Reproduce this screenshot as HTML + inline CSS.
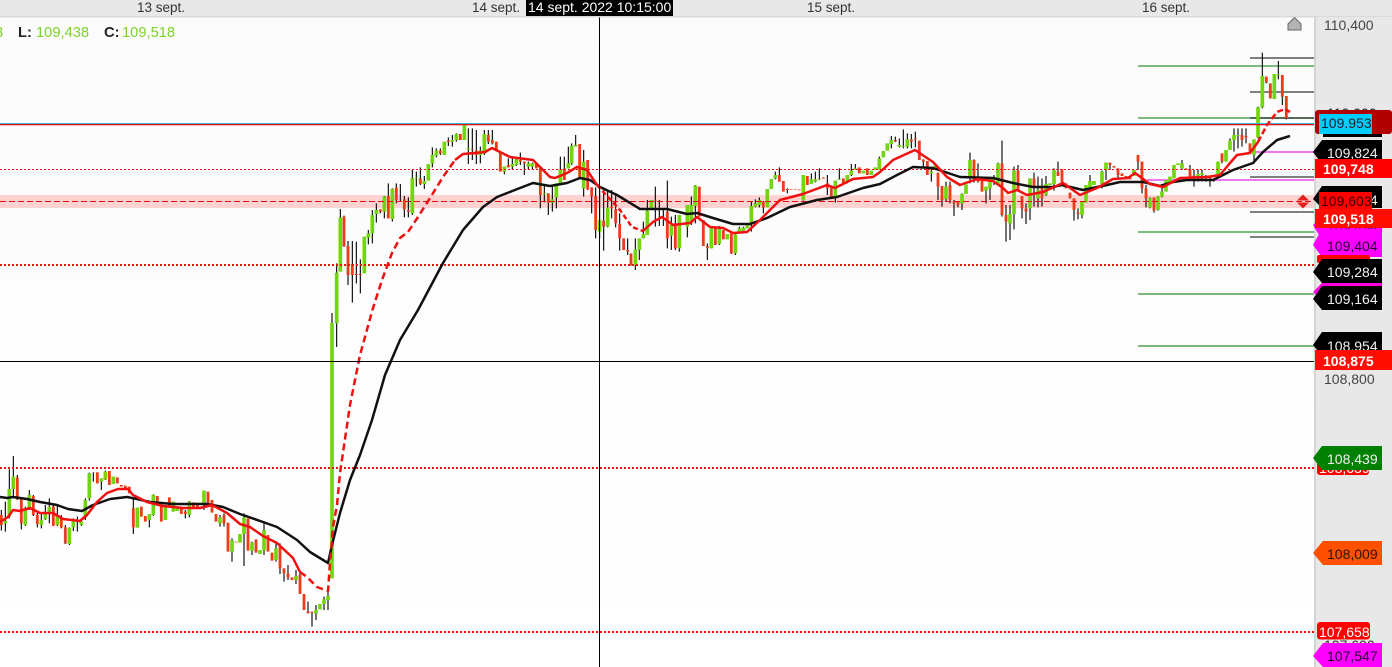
<!DOCTYPE html>
<html><head><meta charset="utf-8"><style>
html,body{margin:0;padding:0;background:#fff;overflow:hidden}
svg{display:block;font-family:"Liberation Sans",sans-serif;font-size:14px}
.w{fill:none;stroke:#000;stroke-width:3.300}
.g{fill:none;stroke:#72d60e;stroke-width:11}
.r{fill:none;stroke:#ee3c1a;stroke-width:8.500}
.ma{fill:none;stroke-width:2.500;stroke-linejoin:round;stroke-linecap:butt}
.d{font-size:13.500px}
.h{font-size:14.700px}
</style></head><body>
<svg width="1392" height="667" viewBox="0 0 1392 667" xmlns="http://www.w3.org/2000/svg">
<defs><linearGradient id="bg" x1="0" y1="0" x2="0" y2="1"><stop offset="0" stop-color="#fbfbfb"/><stop offset=".5" stop-color="#fdfdfd"/><stop offset="1" stop-color="#fff"/></linearGradient></defs>
<rect width="1392" height="667" fill="url(#bg)"/>
<rect y="195" width="1315" height="13" fill="#ffd2d2"/>
<rect x="1138" y="65" width="177" height="2" fill="#7cb97c"/>
<rect x="1138" y="117" width="177" height="2" fill="#7cb97c"/>
<rect x="1138" y="231" width="177" height="2" fill="#7cb97c"/>
<rect x="1138" y="293" width="177" height="2" fill="#7cb97c"/>
<rect x="1138" y="345" width="177" height="2" fill="#7cb97c"/>
<rect x="1250" y="57" width="65" height="2" fill="#808080"/>
<rect x="1250" y="91" width="65" height="2" fill="#808080"/>
<rect x="1250" y="117" width="65" height="2" fill="#556b55"/>
<rect x="1250" y="176" width="65" height="2" fill="#808080"/>
<rect x="1250" y="211" width="65" height="2" fill="#808080"/>
<rect x="1250" y="236" width="65" height="2" fill="#808080"/>
<rect x="1255" y="151" width="60" height="2" fill="#f075f0"/>
<rect x="1147" y="179" width="168" height="2" fill="#f075f0"/>

<g transform="translate(0,440) scale(.33333)">
<path class="w" d="M4 210V272M16 185V275M28 88V235M40 48V175M52 105V180M64 175V268M76 200V258M88 150V210M100 165V228M112 215V262M124 220V265M136 195V240M148 175V250M160 195V258M172 195V258M184 225V265M196 255V312M208 262V315M220 235V273M232 230V275M244 235V258M256 175V240M268 98V182M280 97V125M292 97V130M304 115V150M316 92V120M400 175V282M412 203V263M448 222V262M460 163V228M484 200V245M520 185V215M556 210V235M568 183V232M612 152V210M660 225V260M672 220V260M696 295V365M732 220V378M756 305V345M792 250V345M828 310V365M840 310V402M852 385V425M864 375V420M888 390V432M900 395V462M924 485V520M936 515V560M948 495V540M972 470V510M984 440V510M996 -381V-340"/>
<path class="g" d="M16 243V250M28 147V230M40 110V147M76 203V255M88 165V205M124 240V255M136 220V238M148 200V215M172 227V255M208 263V312M220 245V262M244 245V255M256 180V232M268 100V175M304 115V125M316 95V118M340 110V132M412 203V263M448 222V240M460 165V225M496 200V240M520 185V215M532 205V213M568 185V225M612 152V195M660 232V250M696 300V335M720 282V308M732 232V282M756 308V333M780 330V342M792 270V332M828 325V360M888 408V420M948 510V520M960 492V508M972 478V492M984 468V480M996 -351V415"/>
<path class="r" d="M4 225V255M52 113V178M64 178V250M100 168V225M112 225V252M160 200V257M184 232V262M196 262V310M232 240V245M280 97V98M292 97V130M328 93V135M352 112V130M364 135V140M376 137V145M388 140V160M400 205V262M424 200V230M436 228V245M472 168V195M484 200V245M508 172V198M544 203V222M556 215V222M580 187V205M592 188V205M624 155V190M636 180V218M648 222V245M672 225V250M684 248V335M708 305V307M744 235V332M768 298V338M804 285V335M816 338V362M840 320V385M852 385V400M864 400V412M876 412V420M900 405V462M912 462V510M924 515V520M936 515V518"/>
</g>

<g transform="translate(320,110) scale(.33333)">
<path class="w" d="M50 460V711M61 297V485M72 317V410M84 393V525M97 393V578M109 395V520M121 448V550M145 360V403M157 300V400M169 280V338M181 298V310M193 258V325M205 220V325M217 235V335M229 220V280M241 222V275M253 258V322M265 262V322M277 180V315M289 185V230M301 172V225M313 198V237M337 112V172M349 115V142M361 115V135M385 82V108M397 75V110M409 70V95M445 55V162M457 55V150M469 60V162M481 110V160M493 60V135M505 60V102M517 60V103M553 170V193M565 145V172M577 143V178M589 143V168M601 128V165M613 155V195M625 155V178M637 158V180M661 170V295M673 225V277M685 250V315M697 230V305M709 220V295M721 140V225M733 140V210M745 110V175M755 100V165M767 75V110M791 120V260M803 150V240M815 232V310M827 232V385M839 232V385M851 232V422M863 240V352M875 240V325M887 255V352M899 310V422"/>
<path class="g" d="M50 488V640M61 323V485M133 380V490M145 370V383M157 315V370M169 300V312M193 260V305M217 237V327M277 205V310M289 203V205M313 213V222M325 162V212M337 135V160M349 122V137M373 95V135M397 90V95M409 72V90M433 42V90M445 115V118M481 122V135M493 72V130M553 170V185M577 162V170M589 148V165M625 160V170M637 160V170M673 250V253M697 268V278M709 220V262M721 178V220M745 160V175M755 108V160M767 105V110M791 155V235M839 330V365M863 293V350"/>
<path class="r" d="M72 320V410M84 408V495M97 462V495M109 492V495M121 492V495M181 298V305M205 258V325M229 233V270M253 268V298M265 300V305M301 205V222M361 122V130M385 92V96M421 72V90M457 118V120M469 122V135M505 75V95M517 90V100M529 95V120M541 125V185M565 165V172M601 150V155M613 155V160M649 160V175M661 170V255M685 250V278M733 175V210M779 102V205M803 150V238M815 232V260M827 258V360M851 332V350M875 290V295M887 297V340M899 342V385"/>
</g>

<g transform="translate(590,120) scale(.33333)">
<path class="w" d="M101 355V390M113 355V405M136 355V450M148 355V420M160 305V355M172 240V345M196 200V320M208 240V318M220 270V318M232 182V385M244 290V390M256 285V390M268 285V395M292 255V352M304 230V315M316 195V310M352 370V420M364 320V385M388 318V375M424 340V402M436 340V405M448 320V340M460 320V340M484 245V335M496 238V262M508 232V262M520 243V280M556 155V178M568 142V185M592 205V220M640 165V242M664 160V192M676 155V187M688 145V180M712 165V225M736 182V248M748 145V178M772 165V190M784 132V168M796 132V150M868 110V150"/>
<path class="g" d="M136 388V435M148 355V390M160 342V355M172 272V345M184 240V265M244 315V347M268 285V385M292 255V320M304 255V310M316 197V258M364 325V385M388 323V372M412 342V358M436 343V400M448 325V338M460 323V333M472 315V325M484 258V310M496 250V260M508 240V255M532 207V262M544 177V207M556 165V175M640 165V240M664 178V192M676 178V185M688 178V180M736 182V230M748 178V180M772 165V185M784 152V165M796 145V150M820 152V160M844 152V165M856 142V150M868 115V150M880 93V112M892 70V92"/>
<path class="r" d="M101 355V390M113 390V395M123 400V437M196 240V242M232 275V355M256 310V385M280 308V312M328 200V290M340 300V378M352 378V383M376 325V375M400 330V358M424 340V400M520 245V262M568 165V185M580 183V215M592 207V210M604 208V210M616 208V210M628 209V211M652 168V195M700 172V176M712 190V205M724 203V230M760 175V190M808 142V160M832 145V165"/>
</g>

<g transform="translate(880,120) scale(.33333)">
<path class="w" d="M34 48V85M46 50V66M58 55V82M70 28V85M82 40V85M94 42V85M106 35V82M130 118V145M154 140V185M174 158V240M186 198V260M198 185V245M210 185V250M222 240V288M234 245V262M246 220V270M270 98V190M282 118V188M294 130V188M318 200V250M330 175V240M342 165V195M354 128V195M366 62V290M378 255V365M390 255V360M402 140V328M414 135V210M426 228V295M438 250V312M450 175V300M462 158V260M474 170V262M486 175V260M498 168V228M522 145V212M534 125V168M582 235V302M594 265V298M606 245V295M630 165V205M666 152V205M678 128V180M690 128V150M714 145V175M774 105V150M786 125V220M798 195V262M810 232V265M822 232V278M834 228V272M846 200V232"/>
<path class="g" d="M34 60V72M58 75V80M70 78V80M82 58V80M154 155V160M166 135V150M198 200V237M246 222V250M258 193V222M270 120V175M318 200V212M330 175V205M342 175V180M354 130V195M390 282V310M402 152V282M450 175V265M474 210V235M498 192V225M510 190V195M522 150V192M606 245V285M618 195V248M630 183V205M642 183V195M666 155V192M678 128V150M762 150V168M810 235V262M834 230V270M846 215V230M858 180V215M870 170V190M882 135V175M894 130V135"/>
<path class="r" d="M46 60V65M94 58V65M106 55V58M118 62V120M130 118V125M142 123V165M174 158V200M186 198V240M210 195V240M222 245V250M234 245V255M282 120V175M294 170V185M306 180V215M366 130V285M378 285V305M414 152V210M426 228V265M438 265V275M462 175V205M486 205V235M534 155V168M546 148V190M558 190V205M570 218V235M582 235V270M594 278V282M690 128V135M702 138V143M714 145V165M726 160V168M738 168V175M750 172V178M774 105V125M786 125V205M798 205V235M822 232V272"/>
</g>

<g transform="translate(1130,0) scale(.33333)">
<path class="w" d="M156 480V510M180 495V540M192 510V560M204 508V545M216 510V540M228 525V545M240 530V560M252 535V545M264 485V525M276 460V490M288 450V485M300 415V450M312 385V455M324 385V445M336 385V440M348 385V430M360 430V460M372 418V490M384 320V415M397 158V325M409 230V250M421 250V295M433 222V297M445 183V238M457 225V315M469 288V358"/>
<path class="g" d="M156 490V505M204 522V528M216 520V525M228 530V534M264 485V522M288 450V485M300 422V450M312 405V420M324 405V407M372 418V465M384 322V412M397 228V322M433 222V297M445 222V224"/>
<path class="r" d="M168 505V510M180 510V535M192 527V530M240 532V535M276 460V485M336 405V420M348 408V412M360 430V455M409 230V248M421 250V295M457 225V290M469 288V355"/>
</g>

<g>
<rect x="0" y="123" width="1315" height="1" fill="#2cc0e0"/>
<rect x="0" y="124" width="1315" height="1.300" fill="#e81010"/>
<line x1="0" y1="169.500" x2="1315" y2="169.500" stroke="#e01010" stroke-dasharray="2 2"/>
<line x1="0" y1="201.500" x2="1315" y2="201.500" stroke="#e01010" stroke-dasharray="6 3"/>
<line x1="0" y1="265" x2="1315" y2="265" stroke="#ee1010" stroke-width="2" stroke-dasharray="2 2"/>
<line x1="0" y1="468" x2="1315" y2="468" stroke="#ee1010" stroke-width="2" stroke-dasharray="2 2"/>
<line x1="0" y1="632" x2="1315" y2="632" stroke="#ee1010" stroke-width="2" stroke-dasharray="2 2"/>
</g>

<polyline class="ma" stroke="#111" points="0,497 7,498 13,497 27,499 40,502 57,505 68,509 82,511 93,505 110,499 127,497 137,499 150,502 173,504 207,504 223,507 240,514 263,522 277,527 297,540 310,552 328,563 332,545 340,513 350,480 360,455 372,420 385,375 400,340 418,310 443,263 463,230 483,207 497,197 520,188 533,183 550,186 567,183 580,178 590,180 600,187 617,195 640,209 667,209 687,214 697,213 713,218 733,224 750,224 767,218 790,207 817,200 837,197 863,188 880,184 897,175 913,167 933,168 960,177 993,178 1013,183 1033,187 1053,187 1062,185 1083,190 1107,185 1120,182 1143,182 1160,186 1173,182 1187,180 1213,180 1233,170 1253,163 1263,152 1277,140 1290,136"/>
<polyline class="ma" stroke="#f01010" points="0,522 8,517 13,510 20,511 30,508 40,513 53,513 63,519 80,521 87,515 97,502 107,493 118,489 128,489 133,495 147,502 163,506 183,508 200,508 212,505 227,513 240,524 250,527 263,536 277,543 293,558 300,572"/>
<polyline class="ma" stroke="#f01010" stroke-dasharray="7 4" points="300,572 307,577 317,587 328,591 330,563 333,527 337,505 340,473 350,405 360,355 373,308 382,280 392,253 400,238 408,232 418,217 430,198 443,177 455,160"/>
<polyline class="ma" stroke="#f01010" points="455,160 463,154 475,153 485,152 492,148 498,151 510,157 533,160 540,167 550,177 555,178 567,173 577,167 587,170 597,185"/>
<polyline class="ma" stroke="#f01010" stroke-dasharray="5 3" points="597,185 608,197 620,210 632,227 643,231"/>
<polyline class="ma" stroke="#f01010" points="643,231 653,222 662,217 673,225 690,223 697,217 710,227 723,228 733,233 747,232 760,220 780,200 803,194 827,185 835,188 853,179 873,177 880,172 893,160 915,150 933,162 947,177 960,185 977,179 993,181 1003,188 1008,193 1017,190 1027,195 1043,192 1063,183 1080,195 1097,188 1113,179 1128,178 1135,173 1150,184 1163,187 1180,178 1207,177 1220,175 1230,163 1237,155 1250,153 1258,142"/>
<polyline class="ma" stroke="#f01010" stroke-dasharray="6 3" points="1258,142 1267,125 1277,112 1285,109 1290,112"/>

<rect x="0" y="361" width="1315" height="1" fill="#000"/>
<rect x="599" y="16" width="1" height="651" fill="#000"/>

<polygon points="1303,194.500 1309,200.500 1297,200.500" fill="#e82020"/>
<polygon points="1303,208.500 1309,202.500 1297,202.500" fill="#e82020"/>
<polygon points="1294.500,17.500 1301,24 1301,30 1288,30 1288,24" fill="#b4b4b4" stroke="#666"/>

<rect y="0" width="1392" height="16" fill="#e8e8e8"/>
<rect y="16" width="1392" height="1.500" fill="#dadada"/>
<rect x="1314" y="17" width="78" height="650" fill="#e8e8e8"/>
<rect x="1314" y="17" width="2" height="650" fill="#d4d4d4"/>

<g fill="#333" class="d">
<text x="137" y="12">13 sept.</text>
<text x="472" y="12">14 sept.</text>
<text x="807" y="12">15 sept.</text>
<text x="1142" y="12">16 sept.</text>
</g>
<rect x="526" y="0" width="147" height="16" fill="#000"/>
<text x="528" y="12" fill="#fff">14 sept. 2022 10:15:00</text>

<text x="-5" y="37" fill="#7ed32a" class="h">8</text>
<text x="18" y="37" fill="#222" font-weight="bold" class="h">L:</text>
<text x="36" y="37" fill="#7ed32a" class="h">109,438</text>
<text x="104" y="37" fill="#222" font-weight="bold" class="h">C:</text>
<text x="122" y="37" fill="#7ed32a" class="h">109,518</text>

<g fill="#444">
<text x="1324" y="30">110,400</text>
<text x="1324" y="384">108,800</text>
</g>

<text x="1327" y="118" fill="#222">110,000</text>
<polygon points="1323,128 1382,128 1382,137 1323,137" fill="#000"/>
<rect x="1315" y="110" width="77" height="24" rx="3" fill="#b00000"/>
<rect x="1319" y="114" width="53" height="20" fill="#00ccff"/>
<text x="1321" y="128" fill="#222">109.953</text>

<polygon points="1322,140 1382,140 1382,164 1322,164 1313,152" fill="#000"/>
<text x="1327" y="158" fill="#f2f2f2">109,824</text>
<rect x="1315" y="159" width="77" height="19" fill="#ff0000"/>
<text x="1323" y="174" fill="#fff" font-weight="bold">109,748</text>

<polygon points="1322,186 1382,186 1382,208 1322,208 1313,199" fill="#000"/>
<text x="1327" y="205" fill="#f2f2f2">109,604</text>
<rect x="1319" y="192" width="53" height="18" fill="#ff0000"/>
<text x="1321" y="206" fill="#300">109,603</text>

<polygon points="1322,216 1382,216 1382,240 1322,240 1313,225" fill="#ff00ff"/>
<text x="1327" y="232" fill="#200030">109,494</text>
<polygon points="1322,229 1382,229 1382,257 1322,257 1313,245" fill="#ff00ff"/>
<text x="1327" y="251" fill="#200030">109,404</text>
<rect x="1315" y="209" width="77" height="19" fill="#ff0d00"/>
<text x="1323" y="224" fill="#fff" font-weight="bold">109,518</text>

<rect x="1317" y="255" width="53" height="8" rx="2" fill="#f00"/>
<polygon points="1322,283 1382,283 1382,286 1322,300 1313,292" fill="#ff00dd"/>
<polygon points="1322,259 1382,259 1382,283 1322,283 1313,272" fill="#000"/>
<text x="1327" y="277" fill="#f2f2f2">109,284</text>
<polygon points="1322,286 1382,286 1382,310 1322,310 1313,299" fill="#000"/>
<text x="1327" y="304" fill="#f2f2f2">109,164</text>

<polygon points="1322,332 1382,332 1382,356 1322,356 1313,345" fill="#000"/>
<text x="1327" y="351" fill="#f2f2f2">108,954</text>
<rect x="1315" y="350" width="77" height="20" fill="#ff0d00"/>
<text x="1323" y="366" fill="#fff" font-weight="bold">108,875</text>

<rect x="1317" y="462" width="52" height="13" rx="3" fill="#f00"/>
<text x="1319" y="473" fill="#fff">108,639</text>
<polygon points="1322,446 1382,446 1382,470 1322,470 1313,458" fill="#008000"/>
<text x="1327" y="464" fill="#f2f2f2">108,439</text>

<polygon points="1323,541 1382,541 1382,565 1323,565 1313,553" fill="#ff5000"/>
<text x="1327" y="559" fill="#301000">108,009</text>

<text x="1324" y="650" fill="#333">107,600</text>
<rect x="1317" y="622" width="53" height="17.500" rx="3" fill="#f00"/>
<text x="1319" y="637" fill="#fff">107,658</text>
<polygon points="1323,643 1382,643 1382,667 1323,667 1313,656" fill="#ff00ff"/>
<text x="1327" y="661" fill="#200030">107,547</text>
</svg>
</body></html>
